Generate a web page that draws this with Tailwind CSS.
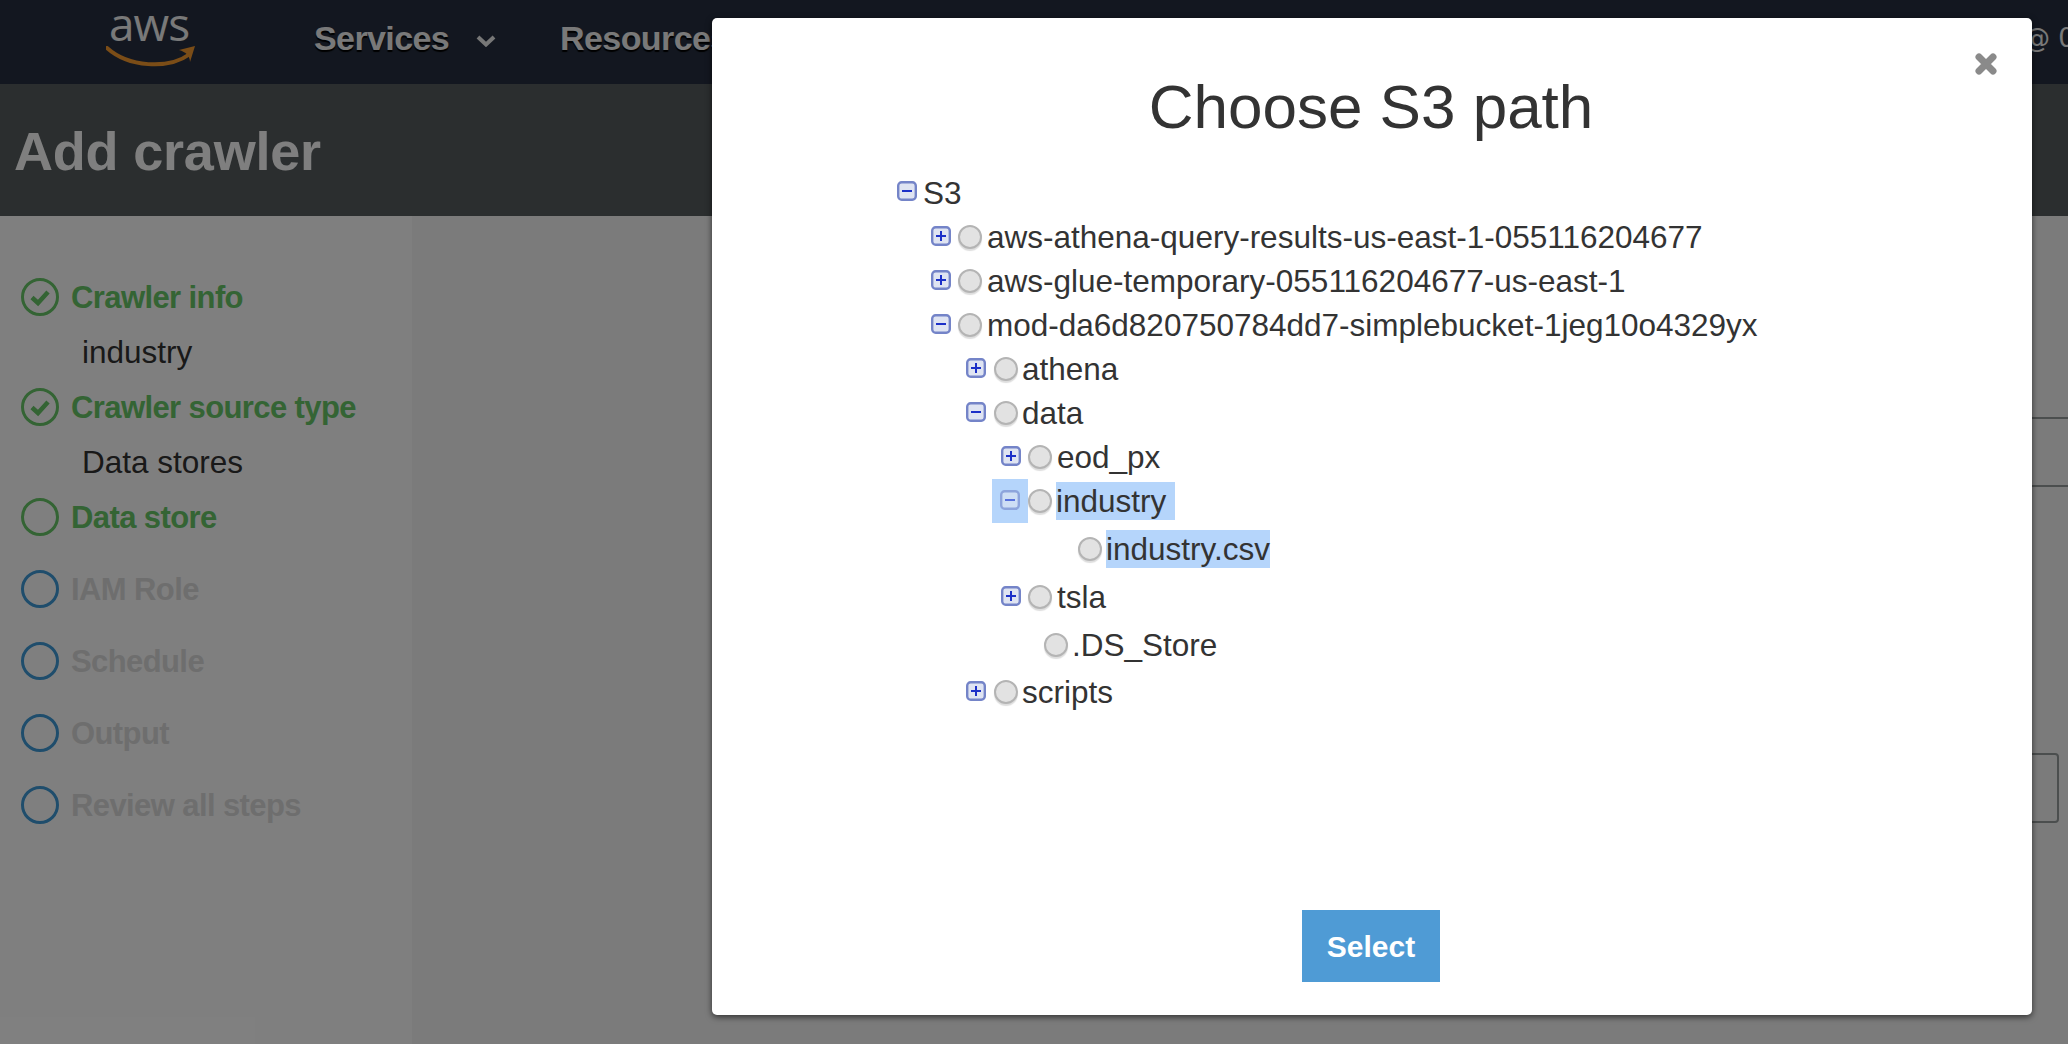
<!DOCTYPE html>
<html lang="en">
<head>
<meta charset="UTF-8" />
<title>Add crawler</title>
<script src="https://cdn.jsdelivr.net/npm/@tailwindcss/browser@4"></script>
</head>
<body class="relative h-[1044px] overflow-hidden bg-white font-['Liberation_Sans',Arial,sans-serif]">

<!-- page behind the modal -->
<div class="flex h-[1044px] flex-col">
  <header class="flex h-[84px] shrink-0 items-center overflow-hidden bg-[#262f40] text-[#f2f2f2]">
    <div class="relative ml-[106px] h-[84px] w-[90px]">
      <span class="absolute left-[3px] top-0 font-['Open_Sans',sans-serif] text-[46px] leading-[46px] tracking-[-1px]">aws</span>
      <svg class="absolute left-0 top-[46px]" width="90" height="21" viewBox="0 0 90 21">
        <path d="M1 2 C22 21 62 24 84 8" fill="none" stroke="#f79a2e" stroke-width="4" stroke-linecap="round"/>
        <path d="M73 4 L89 0 L84 16 C84 10 80 6 73 4 Z" fill="#f79a2e"/>
      </svg>
    </div>
    <span class="mb-[8px] ml-[118px] text-[34px] font-bold tracking-[-0.6px] [text-shadow:0_2px_1px_#000]">Services</span>
    <svg class="ml-[27px] mb-[2px]" width="20" height="12" viewBox="0 0 20 12"><path d="M2 2 L10 9.5 L18 2" fill="none" stroke="#eee" stroke-width="4"/></svg>
    <span class="mb-[8px] ml-[64px] text-[34px] font-bold tracking-[-0.6px] [text-shadow:0_2px_1px_#000]">Resources</span>
    <span class="mb-[8px] ml-auto w-[44px] shrink-0 whitespace-nowrap font-['DejaVu_Sans',sans-serif] text-[26px]">@ 0551</span>
  </header>
  <div class="flex h-[132px] shrink-0 items-center bg-[#565c5e] pl-[14px] pt-[2px]">
    <h1 class="text-[54px] font-bold tracking-[-0.2px] text-white">Add crawler</h1>
  </div>
  <div class="flex flex-1">
    <aside class="w-[412px] shrink-0 bg-white pl-[21px] pt-[62px] text-[31.5px] leading-[38px]">
      <div class="flex h-[38px] items-center gap-[12px] text-[31px] font-bold tracking-[-0.6px] text-[#68c868]">
        <svg width="38" height="38" viewBox="0 0 38 38"><circle cx="19" cy="19" r="17.5" fill="none" stroke="currentColor" stroke-width="3"/><path d="M11 19.5 L17 25 L27 14" fill="none" stroke="currentColor" stroke-width="4.5"/></svg>
        <span class="mt-[2px]">Crawler info</span>
      </div>
      <div class="ml-[61px] mt-[17px] h-[38px] text-[#333]">industry</div>
      <div class="mt-[17px] flex h-[38px] items-center gap-[12px] text-[31px] font-bold tracking-[-0.6px] text-[#68c868]">
        <svg width="38" height="38" viewBox="0 0 38 38"><circle cx="19" cy="19" r="17.5" fill="none" stroke="currentColor" stroke-width="3"/><path d="M11 19.5 L17 25 L27 14" fill="none" stroke="currentColor" stroke-width="4.5"/></svg>
        <span class="mt-[2px]">Crawler source type</span>
      </div>
      <div class="ml-[61px] mt-[17px] h-[38px] text-[#333]">Data stores</div>
      <div class="mt-[17px] flex h-[38px] items-center gap-[12px] text-[31px] font-bold tracking-[-0.6px] text-[#68c868]">
        <span class="size-[38px] rounded-full border-[3px] border-current"></span>
        <span class="mt-[2px]">Data store</span>
      </div>
      <div class="mt-[34px] flex h-[38px] items-center gap-[12px] text-[31px] font-bold tracking-[-0.6px] text-[#dcdcdc]">
        <span class="size-[38px] rounded-full border-[3px] border-[#3e9bd8]"></span>
        <span class="mt-[2px]">IAM Role</span>
      </div>
      <div class="mt-[34px] flex h-[38px] items-center gap-[12px] text-[31px] font-bold tracking-[-0.6px] text-[#dcdcdc]">
        <span class="size-[38px] rounded-full border-[3px] border-[#3e9bd8]"></span>
        <span class="mt-[2px]">Schedule</span>
      </div>
      <div class="mt-[34px] flex h-[38px] items-center gap-[12px] text-[31px] font-bold tracking-[-0.6px] text-[#dcdcdc]">
        <span class="size-[38px] rounded-full border-[3px] border-[#3e9bd8]"></span>
        <span class="mt-[2px]">Output</span>
      </div>
      <div class="mt-[34px] flex h-[38px] items-center gap-[12px] text-[31px] font-bold tracking-[-0.6px] text-[#dcdcdc]">
        <span class="size-[38px] rounded-full border-[3px] border-[#3e9bd8]"></span>
        <span class="mt-[2px]">Review all steps</span>
      </div>
    </aside>
    <main class="flex flex-1 flex-col items-end bg-[#f7f7f7] pr-[9px]">
      <div class="-mr-[9px] mt-[201px] h-[70px] w-[600px] border-y-2 border-[#969c9c]"></div>
      <div class="mt-[266px] h-[70px] w-[400px] rounded-[4px] border-2 border-[#969c9c]"></div>
    </main>
  </div>
</div>

<!-- backdrop -->
<div class="absolute inset-0 bg-black/50"></div>

<!-- modal -->
<section class="absolute left-[712px] top-[18px] flex h-[997px] w-[1320px] flex-col rounded-[5px] bg-white text-[#333] shadow-[0_2px_6px_rgba(0,0,0,0.6)]">
  <svg class="absolute right-[34px] top-[34px]" width="24" height="24" viewBox="0 0 24 24"><path d="M5 5 L19 19 M19 5 L5 19" stroke="#8a8a8a" stroke-width="7" stroke-linecap="round"/></svg>
  <h2 class="mt-[49px] h-[80px] pr-[2px] text-center text-[62px] leading-[80px]">Choose S3 path</h2>

  <div class="mt-[23px] pl-[185px] text-[31.5px] leading-[38px]">
    <div class="flex h-[45px] items-center">
      <svg class="mb-[3px] mr-[6px]" width="20" height="20" viewBox="0 0 20 20"><rect x="1.2" y="1.2" width="17.6" height="17.6" rx="3.5" fill="#dfe4f2" stroke="#7484c8" stroke-width="2.4"/><path d="M5 10 H15" stroke="#1c30c8" stroke-width="2"/></svg>
      S3
    </div>
    <ul class="pl-[34px]">
      <li class="flex h-[44px] items-center">
        <svg class="mb-[3px] mr-[7px]" width="20" height="20" viewBox="0 0 20 20"><rect x="1.2" y="1.2" width="17.6" height="17.6" rx="3.5" fill="#dfe4f2" stroke="#7484c8" stroke-width="2.4"/><path d="M5 10 H15 M10 5 V15" stroke="#1c30c8" stroke-width="2"/></svg>
        <span class="mr-[5px] size-[24px] rounded-full border-2 border-[#b4b4b4] bg-[#e2e2e2] shadow-[0_2px_1px_#dedede]"></span>
        aws-athena-query-results-us-east-1-055116204677
      </li>
      <li class="flex h-[44px] items-center">
        <svg class="mb-[3px] mr-[7px]" width="20" height="20" viewBox="0 0 20 20"><rect x="1.2" y="1.2" width="17.6" height="17.6" rx="3.5" fill="#dfe4f2" stroke="#7484c8" stroke-width="2.4"/><path d="M5 10 H15 M10 5 V15" stroke="#1c30c8" stroke-width="2"/></svg>
        <span class="mr-[5px] size-[24px] rounded-full border-2 border-[#b4b4b4] bg-[#e2e2e2] shadow-[0_2px_1px_#dedede]"></span>
        aws-glue-temporary-055116204677-us-east-1
      </li>
      <li>
        <div class="flex h-[44px] items-center">
          <svg class="mb-[3px] mr-[7px]" width="20" height="20" viewBox="0 0 20 20"><rect x="1.2" y="1.2" width="17.6" height="17.6" rx="3.5" fill="#dfe4f2" stroke="#7484c8" stroke-width="2.4"/><path d="M5 10 H15" stroke="#1c30c8" stroke-width="2"/></svg>
          <span class="mr-[5px] size-[24px] rounded-full border-2 border-[#b4b4b4] bg-[#e2e2e2] shadow-[0_2px_1px_#dedede]"></span>
          mod-da6d820750784dd7-simplebucket-1jeg10o4329yx
        </div>
        <ul class="pl-[35px]">
          <li class="flex h-[44px] items-center">
            <svg class="mb-[3px] mr-[8px]" width="20" height="20" viewBox="0 0 20 20"><rect x="1.2" y="1.2" width="17.6" height="17.6" rx="3.5" fill="#dfe4f2" stroke="#7484c8" stroke-width="2.4"/><path d="M5 10 H15 M10 5 V15" stroke="#1c30c8" stroke-width="2"/></svg>
            <span class="mr-[4px] size-[24px] rounded-full border-2 border-[#b4b4b4] bg-[#e2e2e2] shadow-[0_2px_1px_#dedede]"></span>
            athena
          </li>
          <li>
            <div class="flex h-[44px] items-center">
              <svg class="mb-[3px] mr-[8px]" width="20" height="20" viewBox="0 0 20 20"><rect x="1.2" y="1.2" width="17.6" height="17.6" rx="3.5" fill="#dfe4f2" stroke="#7484c8" stroke-width="2.4"/><path d="M5 10 H15" stroke="#1c30c8" stroke-width="2"/></svg>
              <span class="mr-[4px] size-[24px] rounded-full border-2 border-[#b4b4b4] bg-[#e2e2e2] shadow-[0_2px_1px_#dedede]"></span>
              data
            </div>
            <ul class="pl-[35px]">
              <li class="flex h-[44px] items-center">
                <svg class="mb-[3px] mr-[7px]" width="20" height="20" viewBox="0 0 20 20"><rect x="1.2" y="1.2" width="17.6" height="17.6" rx="3.5" fill="#dfe4f2" stroke="#7484c8" stroke-width="2.4"/><path d="M5 10 H15 M10 5 V15" stroke="#1c30c8" stroke-width="2"/></svg>
                <span class="mr-[5px] size-[24px] rounded-full border-2 border-[#b4b4b4] bg-[#e2e2e2] shadow-[0_2px_1px_#dedede]"></span>
                eod_px
              </li>
              <li>
                <div class="flex h-[44px] items-center">
                  <span class="-ml-[9px] flex h-[44px] w-[36px] items-center justify-center bg-[#b5d5fb] pb-[3px]">
                    <svg class="opacity-60" width="20" height="20" viewBox="0 0 20 20"><rect x="1.2" y="1.2" width="17.6" height="17.6" rx="3.5" fill="#dfe4f2" stroke="#7484c8" stroke-width="2.4"/><path d="M5 10 H15" stroke="#1c30c8" stroke-width="2"/></svg>
                  </span>
                  <span class="mr-[4px] size-[24px] rounded-full border-2 border-[#b4b4b4] bg-[#e2e2e2] shadow-[0_2px_1px_#dedede]"></span>
                  <span class="h-[38px] bg-[#b5d5fb] pr-[9px]">industry</span>
                </div>
                <div class="flex h-[52px] items-center pl-[77px]">
                  <span class="mr-[4px] size-[24px] rounded-full border-2 border-[#b4b4b4] bg-[#e2e2e2] shadow-[0_2px_1px_#dedede]"></span>
                  <span class="h-[38px] bg-[#b5d5fb]">industry.csv</span>
                </div>
              </li>
              <li class="flex h-[44px] items-center">
                <svg class="mb-[3px] mr-[7px]" width="20" height="20" viewBox="0 0 20 20"><rect x="1.2" y="1.2" width="17.6" height="17.6" rx="3.5" fill="#dfe4f2" stroke="#7484c8" stroke-width="2.4"/><path d="M5 10 H15 M10 5 V15" stroke="#1c30c8" stroke-width="2"/></svg>
                <span class="mr-[5px] size-[24px] rounded-full border-2 border-[#b4b4b4] bg-[#e2e2e2] shadow-[0_2px_1px_#dedede]"></span>
                tsla
              </li>
              <li class="flex h-[51px] items-center pl-[43px]">
                <span class="mr-[4px] size-[24px] rounded-full border-2 border-[#b4b4b4] bg-[#e2e2e2] shadow-[0_2px_1px_#dedede]"></span>
                .DS_Store
              </li>
            </ul>
          </li>
          <li class="flex h-[44px] items-center">
            <svg class="mb-[3px] mr-[8px]" width="20" height="20" viewBox="0 0 20 20"><rect x="1.2" y="1.2" width="17.6" height="17.6" rx="3.5" fill="#dfe4f2" stroke="#7484c8" stroke-width="2.4"/><path d="M5 10 H15 M10 5 V15" stroke="#1c30c8" stroke-width="2"/></svg>
            <span class="mr-[4px] size-[24px] rounded-full border-2 border-[#b4b4b4] bg-[#e2e2e2] shadow-[0_2px_1px_#dedede]"></span>
            scripts
          </li>
        </ul>
      </li>
    </ul>
  </div>

  <button type="button" class="absolute bottom-[33px] left-[590px] h-[72px] w-[138px] bg-[#4f9bd5] text-[30px] font-bold text-white">Select</button>
</section>

</body>
</html>
